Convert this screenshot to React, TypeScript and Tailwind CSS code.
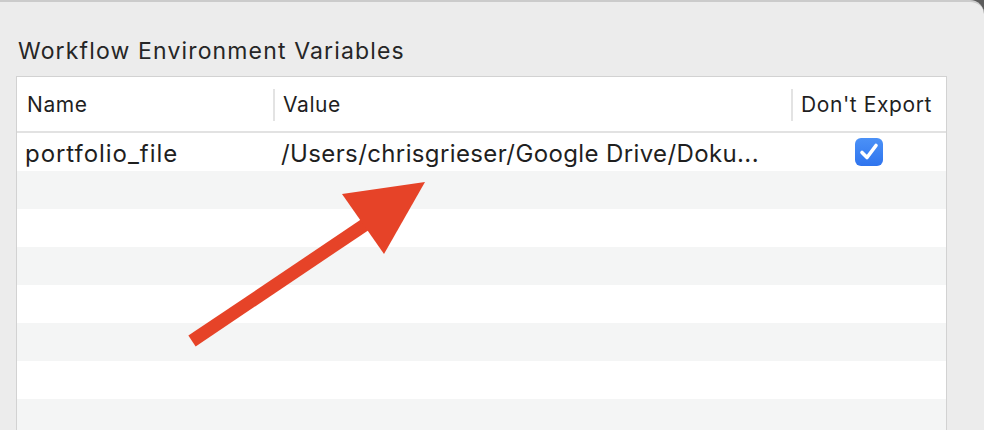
const font = { fontFamily: 'Inter, "Noto Sans", sans-serif' }

const rows = [
  { name: 'portfolio_file', value: '/Users/chrisgrieser/Google Drive/Doku...', noExport: true },
  ...Array.from({ length: 7 }, () => ({ name: '', value: '', noExport: false })),
]

function Checkbox() {
  return (
    <div className="w-[28px] h-[28px] rounded-[6px] bg-gradient-to-b from-[#4b91f7] to-[#2f74ee] flex items-center justify-center">
      <svg width="24" height="24" viewBox="0 0 24 24" fill="none">
        <path d="M5 12.5 L10 17.5 L19 5.5" stroke="white" strokeWidth="3.6" strokeLinecap="round" strokeLinejoin="round" />
      </svg>
    </div>
  )
}

export default function App() {
  return (
    <div className="w-[984px] h-[430px] bg-[#5c5c5c] overflow-hidden" style={font}>
      <div className="relative h-full bg-[#ececec] rounded-tr-[14px] border-t-2 border-[#cbcbcb] pt-[35px]">
        <h2 className="ml-[18px] text-[23px] leading-[28px] tracking-[1.15px] text-[#262626]">Workflow Environment Variables</h2>

        <div className="mt-[11px] ml-[16px] w-[931px] h-[400px] bg-white border border-[#d2d2d2] text-[#1f1f1f]">
          <div className="flex h-[56px] border-b-2 border-[#e2e2e2] text-[21px] tracking-[0.6px] pt-[2px]">
            <div className="w-[256px] flex items-center pl-[10px]">Name</div>
            <div className="w-[518px] flex items-center">
              <div className="w-[2px] h-[32px] bg-[#e3e3e3]" />
              <span className="pl-[8px]">Value</span>
            </div>
            <div className="flex-1 flex items-center">
              <div className="w-[2px] h-[32px] bg-[#e3e3e3]" />
              <span className="pl-[8px]">Don't Export</span>
            </div>
          </div>

          {rows.map((r, i) => (
            <div key={i} className={`flex h-[38px] items-center text-[24px] ${i % 2 === 1 ? 'bg-[#f4f5f5]' : 'bg-white'}`}>
              <div className="w-[256px] pl-[8px] pt-[3px] whitespace-nowrap tracking-[0.95px]">{r.name}</div>
              <div className="w-[518px] pl-[8px] pt-[3px] whitespace-nowrap overflow-hidden tracking-[0.38px]">{r.value}</div>
              <div className="flex-1 flex justify-center">{r.noExport && <Checkbox />}</div>
            </div>
          ))}
        </div>

        <svg className="absolute left-0 top-0 pointer-events-none" width="984" height="430" viewBox="0 0 984 430">
          <line x1="192" y1="339" x2="366" y2="222" stroke="#e64328" strokeWidth="13" />
          <polygon points="425,180 342,192 384,252" fill="#e64328" />
        </svg>
      </div>
    </div>
  )
}
